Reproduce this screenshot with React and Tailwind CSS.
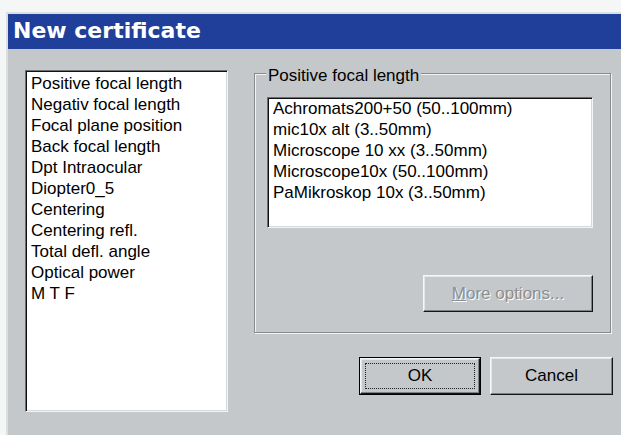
import React from 'react';

const lenses = [
  'Achromats200+50 (50..100mm)',
  'mic10x alt (3..50mm)',
  'Microscope 10 xx (3..50mm)',
  'Microscope10x (50..100mm)',
  'PaMikroskop 10x (3..50mm)',
];

const measurements = [
  'Positive focal length',
  'Negativ focal length',
  'Focal plane position',
  'Back focal length',
  'Dpt Intraocular',
  'Diopter0_5',
  'Centering',
  'Centering refl.',
  'Total defl. angle',
  'Optical power',
  'M T F',
];

// sunken white list box, win9x style
const sunken =
  'bg-white border border-t-[#6c7073] border-l-[#6c7073] border-r-[#f3f4f4] border-b-[#f3f4f4] shadow-[inset_1px_1px_0_#111,inset_-1px_-1px_0_#d6d9db]';

// raised push button bevel
const raised =
  'bg-[#c4c8cb] border border-t-[#f6f7f7] border-l-[#f6f7f7] border-r-[#151515] border-b-[#151515] shadow-[inset_-1px_-1px_0_#7d8184,inset_1px_1px_0_#e3e5e6]';

function ListBox({ items, className = '' }){
  return (
    <div className={`${sunken} ${className} text-[17px] leading-[21px] text-black overflow-hidden`}>
      {items.map(it => <div key={it} className="whitespace-nowrap">{it}</div>)}
    </div>
  );
}

export default function App(){
  return (
    <div className="w-[621px] h-[435px] bg-[#f5f6f6] pt-[12px] pl-[6px] overflow-hidden font-['Liberation_Sans',Arial,sans-serif]">
      <div className="flex flex-col h-full border-l-2 border-t-2 border-[#dcdfe0] bg-[#c4c8cb]">
        <div className="h-[35px] shrink-0 bg-[#1f3f9a] text-white pl-[5px] pb-[2px] font-['DejaVu_Sans',sans-serif] font-bold text-[22px] leading-[33px]">
          New certificate
        </div>

        <div className="flex pl-[17px] pt-[21px]">
          <ListBox items={measurements} className="w-[203px] h-[342px] pl-[5px] pt-[2px]" />

          <div className="ml-[26px] mt-[3px] w-[359px] flex flex-col">
            <div className="relative w-[357px] h-[260px] border border-[#878b8e] shadow-[inset_1px_1px_0_#f2f3f3,1px_1px_0_#f2f3f3] pl-[12px] pt-[23px] pr-[17px] pb-[20px] flex flex-col">
              <span className="absolute left-[11px] top-[-9px] px-[2px] bg-[#c4c8cb] text-[17px] leading-[21px] text-black">
                Positive focal length
              </span>
              <ListBox items={lenses} className="h-[131px] pl-[5px]" />
              <button disabled className={`${raised} self-end mt-[47px] w-[170px] h-[37px] text-[17px] text-[#8b8f92] [text-shadow:1px_1px_0_#fff]`}>
                <span className="underline">M</span>ore options...
              </button>
            </div>

            <div className="flex justify-end gap-[9px] mt-[24px]">
              <button className="w-[122px] h-[38px] border border-black p-0">
                <div className={`${raised} h-full p-[4px]`}>
                  <div className="h-full border border-dotted border-[#222] flex items-center justify-center text-[17px] text-black">
                    OK
                  </div>
                </div>
              </button>
              <button className={`${raised} w-[123px] h-[38px] text-[17px] text-black`}>
                Cancel
              </button>
            </div>
          </div>
        </div>
      </div>
    </div>
  );
}
